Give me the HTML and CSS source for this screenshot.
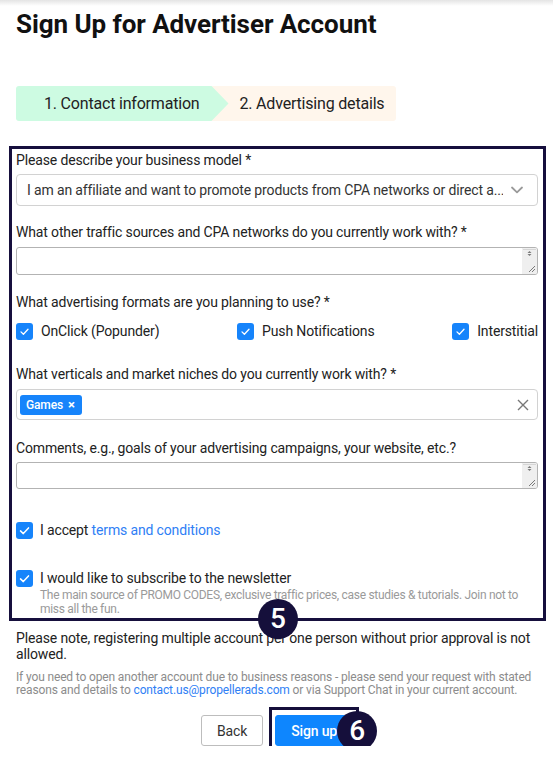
FILE: index.html
```html
<!DOCTYPE html>
<html lang="en">
<head>
<meta charset="utf-8">
<title>Sign Up for Advertiser Account</title>
<link rel="stylesheet" href="styles.css">
</head>
<body>
<div class="shade"></div>
<main class="page">
  <h1 class="title">Sign Up for Advertiser Account</h1>

  <div class="stepper">
    <div class="step step-done">1. Contact information</div>
    <div class="step step-current">2. Advertising details</div>
  </div>

  <form class="form-box">
    <div class="field f1">
      <div class="label">Please describe your business model *</div>
      <div class="select">
        <span class="select-text">I am an affiliate and want to promote products from CPA networks or direct a...</span>
        <svg class="chevron" width="12" height="8" viewBox="0 0 12 8"><polyline points="1,1.5 6,6.3 11,1.5" fill="none" stroke="#9a9a9a" stroke-width="1.8" stroke-linecap="round" stroke-linejoin="round"/></svg>
      </div>
    </div>

    <div class="field f2">
      <div class="label">What other traffic sources and CPA networks do you currently work with? *</div>
      <div class="area area-1">
        <div class="area-field" contenteditable="true"></div>
        <div class="area-bar">
          <svg class="bar-arrows" width="15" height="10" viewBox="0 0 15 10"><path d="M1 1.5 H14" stroke="#d6d6d6" stroke-width="1"/><path d="M5.5 5 L7.5 3 L9.5 5 Z M5.5 6 L7.5 8 L9.5 6 Z" fill="#7a7a7a"/></svg>
          <svg class="bar-grip" width="8" height="8" viewBox="0 0 8 8"><path d="M1 7 L7 1 M4 7 L7 4" stroke="#7a7a7a" stroke-width="1"/></svg>
        </div>
      </div>
    </div>

    <div class="field f3">
      <div class="label">What advertising formats are you planning to use? *</div>
      <div class="checks">
        <label class="check-item"><span class="cb"><svg width="17" height="17" viewBox="0 0 17 17"><rect width="17" height="17" rx="3" fill="#1684fb"/><polyline points="5,8.9 7.4,11.2 12,6.2" fill="none" stroke="#fff" stroke-width="1.3" stroke-linecap="round" stroke-linejoin="round"/></svg></span>OnClick (Popunder)</label>
        <label class="check-item"><span class="cb"><svg width="17" height="17" viewBox="0 0 17 17"><rect width="17" height="17" rx="3" fill="#1684fb"/><polyline points="5,8.9 7.4,11.2 12,6.2" fill="none" stroke="#fff" stroke-width="1.3" stroke-linecap="round" stroke-linejoin="round"/></svg></span>Push Notifications</label>
        <label class="check-item"><span class="cb"><svg width="17" height="17" viewBox="0 0 17 17"><rect width="17" height="17" rx="3" fill="#1684fb"/><polyline points="5,8.9 7.4,11.2 12,6.2" fill="none" stroke="#fff" stroke-width="1.3" stroke-linecap="round" stroke-linejoin="round"/></svg></span>Interstitial</label>
      </div>
    </div>

    <div class="field f4">
      <div class="label">What verticals and market niches do you currently work with? *</div>
      <div class="multi">
        <span class="chip">Games <span class="chip-x">×</span></span>
        <svg class="clear" width="12" height="12" viewBox="0 0 12 12"><path d="M1 1 L11 11 M11 1 L1 11" stroke="#777" stroke-width="1.4" fill="none"/></svg>
      </div>
    </div>

    <div class="field f5">
      <div class="label">Comments, e.g., goals of your advertising campaigns, your website, etc.?</div>
      <div class="area area-2">
        <div class="area-field" contenteditable="true"></div>
        <div class="area-bar">
          <svg class="bar-arrows" width="15" height="10" viewBox="0 0 15 10"><path d="M1 1.5 H14" stroke="#d6d6d6" stroke-width="1"/><path d="M5.5 5 L7.5 3 L9.5 5 Z M5.5 6 L7.5 8 L9.5 6 Z" fill="#7a7a7a"/></svg>
          <svg class="bar-grip" width="8" height="8" viewBox="0 0 8 8"><path d="M1 7 L7 1 M4 7 L7 4" stroke="#7a7a7a" stroke-width="1"/></svg>
        </div>
      </div>
    </div>

    <div class="check-row accept">
      <span class="cb"><svg width="17" height="17" viewBox="0 0 17 17"><rect width="17" height="17" rx="3" fill="#1684fb"/><polyline points="4.5,8.9 7.3,11.6 12.5,5.9" fill="none" stroke="#fff" stroke-width="1.5" stroke-linecap="round" stroke-linejoin="round"/></svg></span>
      <span class="row-text">I accept <a class="link" href="#">terms and conditions</a></span>
    </div>

    <div class="check-row newsletter">
      <span class="cb"><svg width="17" height="17" viewBox="0 0 17 17"><rect width="17" height="17" rx="3" fill="#1684fb"/><polyline points="4.5,8.9 7.3,11.6 12.5,5.9" fill="none" stroke="#fff" stroke-width="1.5" stroke-linecap="round" stroke-linejoin="round"/></svg></span>
      <div class="row-body">
        <div class="row-text">I would like to subscribe to the newsletter</div>
        <div class="row-sub">The main source of PROMO CODES, exclusive traffic prices, case studies &amp; tutorials. Join not to miss all the fun.</div>
      </div>
    </div>

    <span class="badge badge-5">5</span>
  </form>

  <p class="note">Please note, registering multiple account per one person without prior approval is not allowed.</p>
  <p class="small">If you need to open another account due to business reasons - please send your request with stated reasons and details to <a class="link" href="#">contact.us@propellerads.com</a> or via Support Chat in your current account.</p>

  <div class="actions">
    <button type="button" class="btn btn-back">Back</button>
    <div class="signup-wrap">
      <button type="button" class="btn btn-primary">Sign up</button>
      <span class="hl"></span>
      <span class="badge badge-6">6</span>
    </div>
  </div>
</main>
</body>
</html>
```

FILE: styles.css
```css
html, body {
  margin: 0;
  background: #fff;
}
body {
  font-family: Roboto, "Noto Sans", "Liberation Sans", sans-serif;
  color: #222;
  letter-spacing: -0.009em;
}
.shade {
  height: 6px;
  background: linear-gradient(#e4e4e4, #fff);
}
.page {
  padding: 0 15px 0 16px;
}
.title {
  margin: 3px 0 0;
  font-size: 26px;
  line-height: 30px;
  font-weight: 700;
  color: #111;
  letter-spacing: -0.07px;
}

/* stepper */
.stepper {
  display: flex;
  width: max-content;
  margin-top: 47px;
  height: 35px;
  font-size: 16px;
  line-height: 35px;
  color: #222;
  letter-spacing: -0.012em;
}
.step {
  white-space: nowrap;
}
.step-done {
  position: relative;
  z-index: 1;
  background: #cdfbe2;
  padding: 0 29px 0 28px;
  border-radius: 3px 0 0 3px;
  clip-path: polygon(0 0, calc(100% - 17px) 0, 100% 50%, calc(100% - 17px) 100%, 0 100%);
}
.step-current {
  background: #fff6ec;
  margin-left: -17px;
  padding: 0 12px 0 28px;
  border-radius: 0 3px 3px 0;
}

/* form box */
.form-box {
  position: relative;
  margin: 25px 0 0 -7px;
  width: 522px;
  border: 3px solid #160f3d;
  padding: 1px 5px 2px 4px;
}
.label {
  font-size: 14px;
  line-height: 20px;
  color: #222;
}
.f1 { margin-bottom: 16px; }
.f1 .label { margin-bottom: 4px; }
.f2 { margin-bottom: 17px; }
.f2 .label { margin-bottom: 5px; }
.f3 { margin-bottom: 23px; }
.f4 { margin-bottom: 18px; }
.f4 .label { margin-bottom: 5px; }
.f5 .label { margin-bottom: 4px; }

.select {
  box-sizing: border-box;
  height: 32px;
  border: 1px solid #d2d2d2;
  border-radius: 4px;
  display: flex;
  align-items: center;
  gap: 8px;
  padding: 0 14px 0 10px;
}
.select-text {
  flex: 1;
  min-width: 0;
  overflow: hidden;
  font-size: 14px;
  color: #333;
  white-space: nowrap;
}
.chevron {
  display: block;
  flex: none;
}

.area {
  box-sizing: border-box;
  display: flex;
  border: 1px solid #b3b3b3;
  border-radius: 3px;
  background: #fff;
  overflow: hidden;
}
.area-1 { height: 28px; }
.area-2 { height: 27px; }
.area-field {
  flex: 1;
  outline: none;
}
.area-bar {
  width: 15px;
  flex: none;
  background: #efefef;
  display: flex;
  flex-direction: column;
  justify-content: space-between;
  align-items: flex-end;
}
.bar-arrows, .bar-grip {
  display: block;
}
.bar-grip {
  margin: 0 1px 1px 0;
}

.checks {
  display: flex;
  justify-content: space-between;
  margin-top: 9px;
  height: 20px;
}
.check-item {
  display: flex;
  align-items: center;
  gap: 8px;
  font-size: 14px;
  line-height: 20px;
  color: #222;
}
.cb {
  display: block;
  width: 17px;
  height: 17px;
  flex: none;
}
.cb svg { display: block; }

.multi {
  box-sizing: border-box;
  height: 31px;
  border: 1px solid #d2d2d2;
  border-radius: 4px;
  display: flex;
  align-items: center;
  justify-content: space-between;
  padding: 0 8px 0 3px;
}
.chip {
  display: inline-flex;
  align-items: center;
  gap: 5px;
  height: 20px;
  padding: 0 7px 0 6px;
  background: #1684fb;
  color: #fff;
  border-radius: 3px;
  font-size: 12px;
  font-weight: 500;
}
.chip-x {
  font-size: 13px;
  font-weight: 700;
}
.clear { display: block; }

.check-row {
  display: flex;
  align-items: flex-start;
  gap: 7px;
  font-size: 14px;
  line-height: 20px;
}
.check-row .cb { margin-top: 1.5px; }
.accept { margin-top: 31px; }
.newsletter { margin-top: 28px; }
.row-text { color: #222; }
.row-sub {
  font-size: 12px;
  line-height: 14px;
  color: #9a9a9a;
  letter-spacing: -0.025em;
}
.link {
  color: #2f80f5;
  text-decoration: none;
}

.badge {
  position: absolute;
  width: 40px;
  height: 40px;
  border-radius: 50%;
  background: #150f3b;
  color: #fff;
  font-size: 28px;
  font-weight: 500;
  line-height: 40px;
  text-align: center;
  letter-spacing: 0;
  z-index: 2;
}
.badge-5 {
  left: 246px;
  bottom: -21px;
}

.note {
  margin: 9px 0 0;
  font-size: 14px;
  line-height: 16px;
  color: #222;
}
.small {
  margin: 9px 0 0;
  font-size: 12px;
  line-height: 13px;
  color: #8c8c8c;
}

.actions {
  display: flex;
  justify-content: center;
  gap: 12px;
  margin-top: 18px;
}
.btn {
  box-sizing: border-box;
  height: 31px;
  border-radius: 3px;
  font-family: inherit;
  font-size: 14px;
  letter-spacing: inherit;
  padding: 0 15px;
  cursor: pointer;
}
.btn-back {
  background: #fff;
  border: 1px solid #bdbdbd;
  color: #333;
}
.btn-primary {
  background: #0e86fe;
  border: 1px solid #0e86fe;
  color: #fff;
  font-weight: 500;
}
.signup-wrap {
  position: relative;
}
.hl {
  position: absolute;
  top: -8px;
  left: -6px;
  right: -6px;
  bottom: -7px;
  border: 3px solid #150f3b;
  pointer-events: none;
}
.badge-6 {
  left: 62px;
  top: -4px;
}
```
